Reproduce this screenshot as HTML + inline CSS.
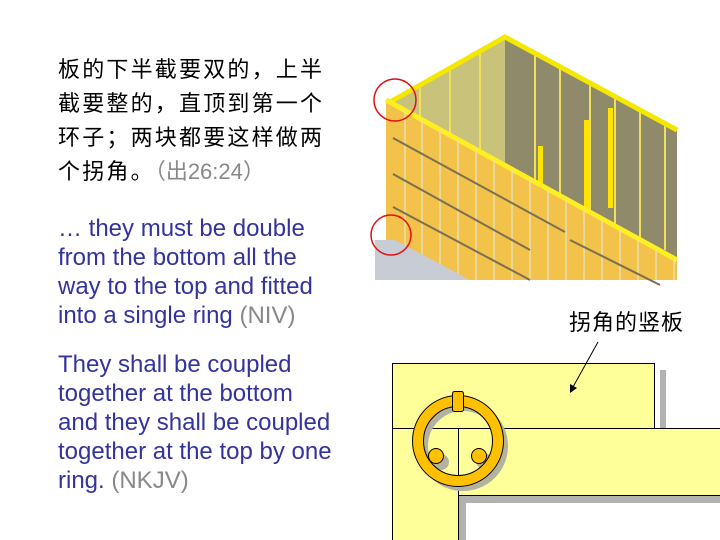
<!DOCTYPE html>
<html><head><meta charset="utf-8"><style>
body{margin:0;width:720px;height:540px;background:#fff;position:relative;overflow:hidden;font-family:"Liberation Sans","Noto Sans CJK SC",sans-serif}
.cn{position:absolute;left:58px;top:53px;font-size:22px;line-height:34px;letter-spacing:2.2px;color:#000;font-family:"Liberation Sans","Noto Sans CJK SC",sans-serif}
.g{color:#888;letter-spacing:0}
.en{position:absolute;left:58px;font-size:24px;line-height:29px;color:#3333a0}
</style></head><body>
<div class="cn">板的下半截要双的，上半<br>截要整的，直顶到第一个<br>环子；两块都要这样做两<br>个拐角。<span class="g">（出26:24）</span></div>
<div class="en" style="top:214px">… they must be double<br>from the bottom all the<br>way to the top and fitted<br>into a single ring <span class="g">(NIV)</span></div>
<div class="en" style="top:350px">They shall be coupled<br>together at the bottom<br>and they shall be coupled<br>together at the top by one<br>ring. <span class="g">(NKJV)</span></div>
<div style="position:absolute;left:569px;top:305px;font-size:22px;letter-spacing:1px;font-family:'Liberation Sans','Noto Sans CJK SC',sans-serif">拐角的竖板</div>
<svg width="720" height="540" style="position:absolute;left:0;top:0">
<polygon points="390,102 505,37 505,200 390,250" fill="#c9c27a"/>
<polygon points="505,37 677,130 677,262 505,180" fill="#8e8a6a"/>
<g stroke="#f0e060" stroke-width="2">
<line x1="420" y1="85" x2="420" y2="240"/><line x1="450" y1="68" x2="450" y2="230"/><line x1="480" y1="52" x2="480" y2="220"/>
<line x1="535" y1="55" x2="535" y2="200"/><line x1="560" y1="68" x2="560" y2="210"/><line x1="590" y1="84" x2="590" y2="220"/><line x1="615" y1="98" x2="615" y2="230"/><line x1="640" y1="110" x2="640" y2="240"/><line x1="665" y1="124" x2="665" y2="250"/>
</g>
<rect x="538" y="146" width="5" height="60" fill="#ffe400"/><rect x="584" y="120" width="5" height="90" fill="#ffe400"/><rect x="608" y="108" width="5" height="100" fill="#ffe400"/>
<polyline points="390,102 505,37 677,130" fill="none" stroke="#f5e800" stroke-width="5"/>
<polygon points="386,100 677,260 677,280 400,280 386,250" fill="#f2c24a"/>
<polyline points="386,100 677,260" stroke="#ffef20" stroke-width="5"/>
<g stroke="#e8e0b0" stroke-width="1.5">
<line x1="405" y1="110" x2="405" y2="280"/><line x1="422" y1="119" x2="422" y2="280"/><line x1="440" y1="129" x2="440" y2="280"/><line x1="458" y1="139" x2="458" y2="280"/><line x1="476" y1="149" x2="476" y2="280"/><line x1="494" y1="159" x2="494" y2="280"/><line x1="512" y1="169" x2="512" y2="280"/><line x1="530" y1="179" x2="530" y2="280"/><line x1="548" y1="189" x2="548" y2="280"/><line x1="566" y1="199" x2="566" y2="280"/><line x1="584" y1="209" x2="584" y2="280"/><line x1="602" y1="219" x2="602" y2="280"/><line x1="620" y1="229" x2="620" y2="280"/><line x1="638" y1="239" x2="638" y2="280"/><line x1="656" y1="249" x2="656" y2="280"/><line x1="674" y1="259" x2="674" y2="280"/>
</g>
<g stroke="#7a7050" stroke-width="2">
<line x1="393" y1="138" x2="565" y2="232"/><line x1="393" y1="174" x2="530" y2="250"/><line x1="570" y1="240" x2="660" y2="285"/><line x1="393" y1="207" x2="530" y2="280"/>
</g>
<polygon points="375,240 395,240 470,280 375,280" fill="#c8ccd4"/>
<circle cx="395" cy="100" r="21" fill="none" stroke="#e01010" stroke-width="1.5"/>
<circle cx="391" cy="235" r="20" fill="none" stroke="#e01010" stroke-width="1.5"/>
<rect x="660" y="370" width="6" height="58" fill="#b2b2b2"/>
<rect x="464" y="495" width="256" height="8" fill="#b2b2b2"/>
<rect x="458" y="495" width="8" height="45" fill="#b2b2b2"/>
<rect x="392.5" y="363.5" width="262" height="65" fill="#ffff99" stroke="#000"/>
<rect x="458.5" y="428.5" width="262" height="67" fill="#ffff99" stroke="#000"/>
<rect x="392.5" y="428.5" width="66" height="112" fill="#ffff99" stroke="#000"/>
<circle cx="463" cy="446" r="40" fill="none" stroke="#b2b2a0" stroke-width="10"/>
<circle cx="441" cy="462" r="8" fill="#b2b2a0"/><circle cx="484" cy="461" r="8" fill="#b2b2a0"/>
<line x1="458.5" y1="428" x2="458.5" y2="486" stroke="#000"/>
<circle cx="458" cy="441" r="40" fill="none" stroke="#000" stroke-width="12"/>
<circle cx="458" cy="441" r="40" fill="none" stroke="#ffc000" stroke-width="10"/>
<rect x="452.5" y="391.5" width="11" height="20" rx="2" fill="#ffc000" stroke="#000"/>
<circle cx="436" cy="456" r="7.5" fill="#ffc000" stroke="#000"/>
<circle cx="479" cy="456" r="7.5" fill="#ffc000" stroke="#000"/>
<line x1="598" y1="342" x2="573" y2="387" stroke="#000" stroke-width="1"/>
<polygon points="570,393 570,384 577,388" fill="#000"/>
</svg>
</body></html>
